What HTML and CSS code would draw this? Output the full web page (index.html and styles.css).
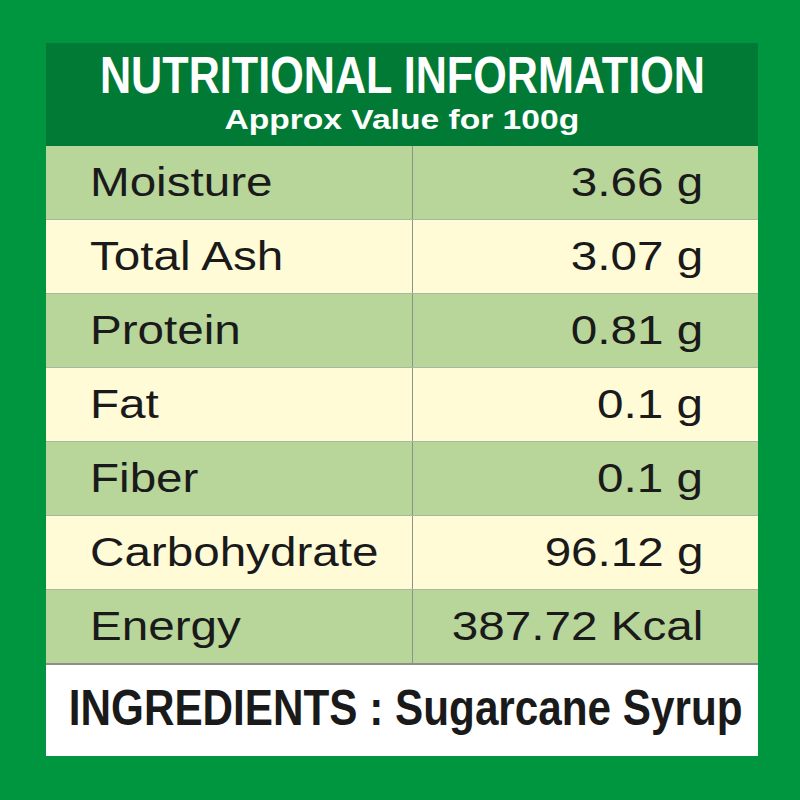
FILE: index.html
```html
<!DOCTYPE html>
<html>
<head>
<meta charset="utf-8">
<link rel="stylesheet" href="styles.css">
</head>
<body>
<div class="page">
  <div class="card">
    <div class="header">
      <div class="title"><span>NUTRITIONAL INFORMATION</span></div>
      <div class="subtitle"><span>Approx Value for 100g</span></div>
    </div>
    <div class="table">
      <div class="row green"><div class="cell label"><span>Moisture</span></div><div class="cell value"><span>3.66 g</span></div></div>
      <div class="row cream"><div class="cell label"><span>Total Ash</span></div><div class="cell value"><span>3.07 g</span></div></div>
      <div class="row green"><div class="cell label"><span>Protein</span></div><div class="cell value"><span>0.81 g</span></div></div>
      <div class="row cream"><div class="cell label"><span>Fat</span></div><div class="cell value"><span>0.1 g</span></div></div>
      <div class="row green"><div class="cell label"><span>Fiber</span></div><div class="cell value"><span>0.1 g</span></div></div>
      <div class="row cream"><div class="cell label"><span>Carbohydrate</span></div><div class="cell value"><span>96.12 g</span></div></div>
      <div class="row green last"><div class="cell label"><span>Energy</span></div><div class="cell value"><span>387.72 Kcal</span></div></div>
    </div>
    <div class="ingredients"><span>INGREDIENTS : Sugarcane Syrup</span></div>
  </div>
</div>
</body>
</html>
```
FILE: styles.css
```css
html, body {
  margin: 0;
  padding: 0;
  background: #00963f;
}
.page {
  width: 800px;
  height: 800px;
  box-sizing: border-box;
  padding: 43px 42px 0 46px;
}
.card {
  width: 712px;
  display: flex;
  flex-direction: column;
}
.header {
  background: #007a34;
  height: 103px;
  display: flex;
  flex-direction: column;
  align-items: center;
  color: #ffffff;
}
.title {
  font-family: "Liberation Sans", Arial, sans-serif;
  font-weight: bold;
  font-size: 52px;
  line-height: 52px;
  margin-top: 6px;
  white-space: nowrap;
}
.title span {
  display: inline-block;
  transform: scaleX(0.83);
}
.subtitle {
  font-family: "Liberation Sans", Arial, sans-serif;
  font-weight: bold;
  font-size: 28px;
  line-height: 30px;
  margin-top: 4px;
  white-space: nowrap;
}
.subtitle span {
  display: inline-block;
  transform: scaleX(1.2);
}
.table {
  display: flex;
  flex-direction: column;
}
.row {
  display: grid;
  grid-template-columns: 367px 1fr;
  height: 73px;
  border-bottom: 1px solid #a9b7a0;
}
.row.last {
  border-bottom: 2px solid #8c8f8a;
}
.green { background: #b8d59a; }
.cream { background: #fffbd7; }
.cell {
  display: flex;
  align-items: center;
  font-family: "Liberation Sans", Arial, sans-serif;
  font-size: 40px;
  color: #1a1a1a;
  white-space: nowrap;
}
.cell span {
  display: inline-block;
  transform: scaleX(1.19);
}
.label {
  padding-left: 44px;
  border-right: 1px solid #8c9488;
}
.label span { transform-origin: left center; }
.value {
  justify-content: flex-end;
  padding-right: 55px;
}
.value span { transform-origin: right center; }
.ingredients {
  background: #ffffff;
  height: 91px;
  box-sizing: border-box;
  padding: 0 0 6px 8px;
  display: flex;
  align-items: center;
  justify-content: center;
  font-family: "Liberation Sans", Arial, sans-serif;
  font-weight: bold;
  font-size: 50px;
  color: #1a1a1a;
  white-space: nowrap;
}
.ingredients span {
  display: inline-block;
  transform: scaleX(0.845);
}
```
